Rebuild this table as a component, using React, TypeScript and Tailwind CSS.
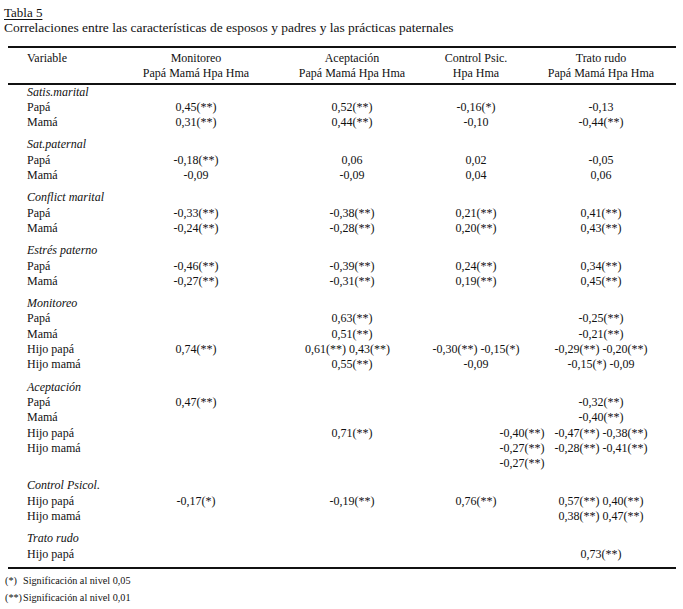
import React from "react";

type Row = { label: string; cells: [string, string, string, string]; shift?: [string, string, string, string] };
type Section = { title: string; rows: Row[] };

const sections: Section[] = [
  {
    title: "Satis.marital",
    rows: [
      { label: "Papá", cells: ["0,45(**)", "0,52(**)", "-0,16(*)", "-0,13"] },
      { label: "Mamá", cells: ["0,31(**)", "0,44(**)", "-0,10", "-0,44(**)"] },
    ],
  },
  {
    title: "Sat.paternal",
    rows: [
      { label: "Papá", cells: ["-0,18(**)", "0,06", "0,02", "-0,05"] },
      { label: "Mamá", cells: ["-0,09", "-0,09", "0,04", "0,06"] },
    ],
  },
  {
    title: "Conflict marital",
    rows: [
      { label: "Papá", cells: ["-0,33(**)", "-0,38(**)", "0,21(**)", "0,41(**)"] },
      { label: "Mamá", cells: ["-0,24(**)", "-0,28(**)", "0,20(**)", "0,43(**)"] },
    ],
  },
  {
    title: "Estrés paterno",
    rows: [
      { label: "Papá", cells: ["-0,46(**)", "-0,39(**)", "0,24(**)", "0,34(**)"] },
      { label: "Mamá", cells: ["-0,27(**)", "-0,31(**)", "0,19(**)", "0,45(**)"] },
    ],
  },
  {
    title: "Monitoreo",
    rows: [
      { label: "Papá", cells: ["", "0,63(**)", "", "-0,25(**)"] },
      { label: "Mamá", cells: ["", "0,51(**)", "", "-0,21(**)"] },
      { label: "Hijo papá", cells: ["0,74(**)", "0,61(**) 0,43(**)", "-0,30(**) -0,15(*)", "-0,29(**) -0,20(**)"], shift: ["", "pr-[9px]", "", ""] },
      { label: "Hijo mamá", cells: ["", "0,55(**)", "-0,09", "-0,15(*) -0,09"] },
    ],
  },
  {
    title: "Aceptación",
    rows: [
      { label: "Papá", cells: ["0,47(**)", "", "", "-0,32(**)"] },
      { label: "Mamá", cells: ["", "", "", "-0,40(**)"] },
      { label: "Hijo papá", cells: ["", "0,71(**)", "-0,40(**)", "-0,47(**) -0,38(**)"], shift: ["", "", "pl-[92px]", ""] },
      { label: "Hijo mamá", cells: ["", "", "-0,27(**)", "-0,28(**) -0,41(**)"], shift: ["", "", "pl-[92px]", ""] },
      { label: "", cells: ["", "", "-0,27(**)", ""], shift: ["", "", "pl-[92px]", ""] },
    ],
  },
  {
    title: "Control Psicol.",
    rows: [
      { label: "Hijo papá", cells: ["-0,17(*)", "-0,19(**)", "0,76(**)", "0,57(**) 0,40(**)"] },
      { label: "Hijo mamá", cells: ["", "", "", "0,38(**) 0,47(**)"] },
    ],
  },
  {
    title: "Trato rudo",
    rows: [{ label: "Hijo papá", cells: ["", "", "", "0,73(**)"] }],
  },
];

const grid = "grid grid-cols-[110px_156px_156px_92px_158px]";

function Cell({ children, extra = "" }: { children?: React.ReactNode; extra?: string }) {
  return <div className={`flex justify-center whitespace-nowrap ${extra}`}>{children}</div>;
}

export default function App() {
  return (
    <div className="w-[683px] h-[609px] bg-white text-[#111] font-['Liberation_Serif','Times_New_Roman',serif] overflow-hidden">
      <div className="pl-[4px] pt-[5px] leading-[15px]">
        <div className="text-[13px] underline underline-offset-2">Tabla 5</div>
        <div className="text-[13.45px]">Correlaciones entre las características de esposos y padres y las prácticas paternales</div>
      </div>

      <div className="ml-[8px] w-[668px] mt-[11px] text-[12px] leading-[15.3px]">
        <div className="border-t-2 border-b-2 border-[#111] pt-[3px] pb-[1px]">
          <div className={grid}>
            <div className="pl-[19px]">Variable</div>
            <Cell>Monitoreo</Cell>
            <Cell>Aceptación</Cell>
            <Cell>Control Psic.</Cell>
            <Cell>Trato rudo</Cell>
            <div />
            <Cell>Papá Mamá Hpa Hma</Cell>
            <Cell>Papá Mamá Hpa Hma</Cell>
            <Cell>Hpa Hma</Cell>
            <Cell>Papá Mamá Hpa Hma</Cell>
          </div>
        </div>

        <div className="border-b-2 border-[#111] pb-[5px]">
          {sections.map((s, i) => (
            <div key={s.title} className={i === 0 ? "" : "mt-[7px]"}>
              <div className="pl-[19px] italic">{s.title}</div>
              {s.rows.map((r, j) => (
                <div key={j} className={grid}>
                  <div className="pl-[19px] whitespace-nowrap h-[15.3px]">{r.label}</div>
                  {r.cells.map((c, k) => (
                    <Cell key={k} extra={r.shift ? r.shift[k] : ""}>
                      {c}
                    </Cell>
                  ))}
                </div>
              ))}
            </div>
          ))}
        </div>
      </div>

      <div className="pl-[5px] pt-[3px] text-[10.2px] leading-[17px]">
        <div className="flex">
          <span className="w-[18px]">(*)</span>
          <span>Significación al nivel 0,05</span>
        </div>
        <div className="flex">
          <span className="w-[18px]">(**)</span>
          <span>Significación al nivel 0,01</span>
        </div>
      </div>
    </div>
  );
}
